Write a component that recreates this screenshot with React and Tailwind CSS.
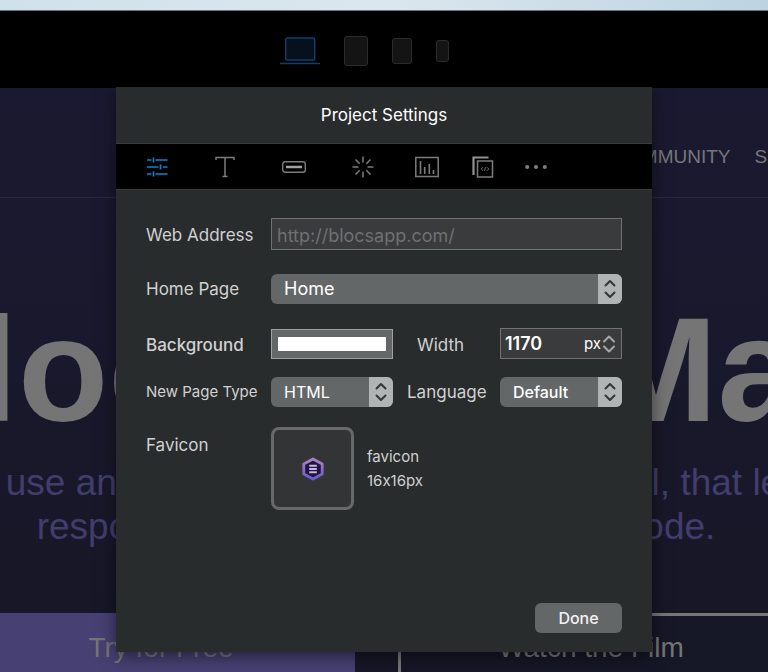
import { useState } from 'react';
import { ChevronDown, ChevronUp } from 'lucide-react';

const SlidersIcon = () => (
  <svg width="22" height="22" viewBox="0 0 22 22" fill="none" stroke="currentColor" strokeWidth="1.6">
    <path d="M1 4h4.500M9.500 4H21.500M1 11h11.500M17 11h4.500M1 18h4.500M9.500 18H21.500" />
    <path d="M7.500 1.500v5M14.500 8.500v5M7.500 15.500v5" />
  </svg>
);

const TypeIcon = () => (
  <svg width="20" height="22" viewBox="0 0 20 22" fill="none" stroke="currentColor" strokeWidth="1.500">
    <path d="M1 4V1.500h18V4M10 1.500v19M7.500 20.500h5" />
  </svg>
);

const ButtonIcon = () => (
  <svg width="24" height="12" viewBox="0 0 24 12" fill="none" stroke="currentColor">
    <rect x="0.700" y="0.700" width="22.600" height="10.600" rx="2.500" strokeWidth="1.400" />
    <path d="M4 6h16" stroke="#a3a3a3" strokeWidth="2.500" />
  </svg>
);

const BurstIcon = () => (
  <svg width="22" height="22" viewBox="0 0 22 22" fill="none" stroke="currentColor" strokeWidth="1.500">
    <path d="M11 0.500v6M11 15.500v6M0.500 11h6M15.500 11h6M3.500 3.500l4.200 4.200M14.300 14.300l4.200 4.200M3.500 18.500l4.200-4.200M14.300 7.700l4.200-4.200" />
  </svg>
);

const ChartIcon = () => (
  <svg width="24" height="22" viewBox="0 0 24 22" fill="none" stroke="currentColor">
    <rect x="0.800" y="1.500" width="22.400" height="19" strokeWidth="1.500" />
    <path d="M5.500 5v13M9.700 11v7M14.300 8v10M18.500 14v4" strokeWidth="1.600" />
  </svg>
);

const PagesIcon = () => (
  <svg width="22" height="22" viewBox="0 0 22 22" fill="none" stroke="currentColor">
    <path d="M1.500 19V1.500h15" stroke="#929292" strokeWidth="2.200" />
    <rect x="5.500" y="5" width="15" height="16" strokeWidth="1.500" />
    <path d="M11 11.200l-1.800 1.800 1.800 1.800M15 11.200l1.800 1.800-1.800 1.800M13.500 11l-1 4" strokeWidth="0.900" />
  </svg>
);

const DotsIcon = () => (
  <svg width="24" height="6" viewBox="0 0 24 6" fill="currentColor">
    <circle cx="3.200" cy="3" r="2.100" />
    <circle cx="12" cy="3" r="2.100" />
    <circle cx="20.800" cy="3" r="2.100" />
  </svg>
);

const FaviconIcon = () => (
  <svg width="26" height="26" viewBox="0 0 24 24" fill="none">
    <defs>
      <linearGradient id="hex" x1="0" y1="0" x2="0" y2="1">
        <stop offset="0" stopColor="#b07fc4" />
        <stop offset="1" stopColor="#6a5cc8" />
      </linearGradient>
    </defs>
    <path
      d="M12 2.700l8.500 4.700v9.200L12 21.300l-8.500-4.700V7.400z"
      fill="#1e1540"
      stroke="url(#hex)"
      strokeWidth="2.600"
      strokeLinejoin="round"
    />
    <path d="M8.500 9h7M8.500 12h7M8.500 15h7" stroke="#c9b8dd" strokeWidth="1.700" />
  </svg>
);

const tabs = [
  { id: 'general', label: 'General', icon: SlidersIcon, width: 'w-[69px]' },
  { id: 'type', label: 'Typography', icon: TypeIcon, width: 'w-[68px]' },
  { id: 'buttons', label: 'Buttons', icon: ButtonIcon, width: 'w-[69px]' },
  { id: 'effects', label: 'Effects', icon: BurstIcon, width: 'w-[69px]' },
  { id: 'analytics', label: 'Analytics', icon: ChartIcon, width: 'w-[59px]' },
  { id: 'code', label: 'Code', icon: PagesIcon, width: 'w-[54px]' },
  { id: 'more', label: 'More', icon: DotsIcon, width: 'w-[52px]' },
];

function Chevrons() {
  return (
    <svg width="12" height="20" viewBox="0 0 12 20" fill="none" stroke="currentColor" strokeWidth="2" strokeLinecap="round" strokeLinejoin="round">
      <path d="M1.500 6.500L6 2l4.500 4.500M1.500 13.500L6 18l4.500-4.500" />
    </svg>
  );
}

function Select({ id, options, className }) {
  return (
    <div className="relative">
      <select
        id={id}
        className={`block h-[30px] w-full appearance-none rounded-md bg-[#646768] pl-[13px] pr-7 text-white ${className}`}
      >
        {options.map((option) => (
          <option key={option}>{option}</option>
        ))}
      </select>
      <span className="pointer-events-none absolute inset-y-0 right-0 flex w-6 items-center justify-center rounded-r-md bg-[#b1b4b5] text-[#333637]">
        <Chevrons />
      </span>
    </div>
  );
}

function DeviceBar() {
  return (
    <div className="flex h-[77px] shrink-0 items-center justify-center gap-6 bg-black pr-10 pt-0.5">
      <button type="button" aria-label="Desktop">
        <svg width="40" height="28" viewBox="0 0 40 28" fill="none" stroke="#0d426f">
          <rect x="5.700" y="1" width="29" height="22" rx="1.500" fill="#06111d" strokeWidth="1.400" />
          <path d="M0 26.500h40" strokeWidth="1.400" />
        </svg>
      </button>
      <button type="button" aria-label="Tablet" className="h-[30px] w-6 rounded-[3px] border border-[#2b2b2b] bg-[#141414]" />
      <button type="button" aria-label="Small tablet" className="h-[26px] w-5 rounded-[3px] border border-[#2b2b2b] bg-[#141414]" />
      <button type="button" aria-label="Phone" className="h-[22px] w-[13px] rounded-[3px] border border-[#2b2b2b] bg-[#141414]" />
    </div>
  );
}

function SitePreview() {
  return (
    <div className="flex-1 bg-linear-to-b from-[#1b1931] to-[#161726] font-['Liberation_Sans',Arial,sans-serif]">
      <nav className="flex h-[110px] items-end justify-end border-b border-[#2a2940] pb-7">
        <div className="-mr-[78px] flex gap-6 text-[19px] leading-6 text-[#77777c]">
          <a href="#community">COMMUNITY</a>
          <a href="#support">SUPPORT</a>
        </div>
      </nav>
      <div className="pr-4">
        <h1 className="mt-[92px] flex justify-center gap-[62px] whitespace-nowrap text-[148px] font-bold leading-[160px] text-[#757576]">
          <span>Blocs</span>
          <span>for</span>
          <span>Mac</span>
        </h1>
        <div className="mt-[11px] text-[37px] leading-[44px] text-[#413e6d]">
          <p className="flex justify-center whitespace-nowrap">Fast, easy to use and powerful visual web design tool, that lets you build</p>
          <p className="flex justify-center whitespace-nowrap">responsive websites without writing code.</p>
        </div>
        <div className="mt-16 flex justify-center gap-[43px] text-[28px] text-[#757575]">
          <button type="button" className="h-[70px] w-[387px] shrink-0 bg-[#474073]">Try for Free</button>
          <button type="button" className="h-[70px] w-[387px] shrink-0 border-[3px] border-[#77777a]">Watch the Film</button>
        </div>
      </div>
    </div>
  );
}

function ProjectSettings() {
  const [active, setActive] = useState('general');
  const [color, setColor] = useState('#ffffff');
  const [width, setWidth] = useState(1170);

  return (
    <div
      role="dialog"
      aria-labelledby="settings-title"
      className="flex min-h-[565px] w-[536px] max-w-full flex-col bg-[#292c2d] font-[Inter,sans-serif] text-[17px] leading-6 text-[#d0d1d1] shadow-[0_4px_16px_rgba(0,0,0,0.5)]"
    >
      <h2 id="settings-title" className="flex h-[57px] items-center justify-center border-b border-[#3a3c3d] text-[17px] text-white">
        Project Settings
      </h2>

      <div role="tablist" className="flex h-[46px] border-b border-[#3a3c3d] bg-black pl-[6px]">
        {tabs.map(({ id, label, icon: Icon, width: tabWidth }) => (
          <button
            key={id}
            type="button"
            role="tab"
            aria-label={label}
            aria-selected={active === id}
            onClick={() => setActive(id)}
            className={`flex items-center justify-center ${tabWidth} ${active === id ? 'text-[#0a84d0]' : 'text-[#7c7c7c]'}`}
          >
            <Icon />
          </button>
        ))}
      </div>

      <form className="flex flex-1 flex-col px-[30px] pb-[19px] pt-7" onSubmit={(e) => e.preventDefault()}>
        <div className="grid grid-cols-[125px_1fr_107px_1fr] items-center gap-y-6">
          <label htmlFor="address" className="pt-0.5">Web Address</label>
          <input
            id="address"
            type="text"
            placeholder="http://blocsapp.com/"
            className="col-span-3 h-8 border border-[#707273] bg-[#393b3c] px-[5px] pt-0.5 text-lg text-white placeholder:text-[#6f7172]"
          />

          <label htmlFor="home">Home Page</label>
          <div className="col-span-3">
            <Select id="home" options={['Home']} className="text-lg" />
          </div>

          <label htmlFor="background" className="pt-0.5 font-medium">Background</label>
          <input
            id="background"
            type="color"
            value={color}
            onChange={(e) => setColor(e.target.value)}
            className="h-[30px] w-full border border-[#a0a2a3] bg-[#646768] px-[6px] py-[7px] [&::-webkit-color-swatch-wrapper]:p-0 [&::-webkit-color-swatch]:border-0"
          />
          <label htmlFor="width" className="pl-6 pt-0.5">Width</label>
          <div className="flex h-[31px] items-center border border-[#707273] bg-[#393b3c] pl-1 pr-1 text-white">
            <input
              id="width"
              type="text"
              value={width}
              onChange={(e) => setWidth(Number(e.target.value) || 0)}
              className="w-full min-w-0 text-lg font-semibold"
            />
            <span className="text-[15px]">px</span>
            <span className="flex shrink-0 flex-col text-[#a4a6a7]">
              <button type="button" aria-label="Increase width" onClick={() => setWidth(width + 1)}>
                <ChevronUp className="h-2.5 w-4" viewBox="4 6 16 12" strokeWidth={2.500} />
              </button>
              <button type="button" aria-label="Decrease width" onClick={() => setWidth(width - 1)}>
                <ChevronDown className="h-2.5 w-4" viewBox="4 6 16 12" strokeWidth={2.500} />
              </button>
            </span>
          </div>
        </div>

        <div className="mt-[18px] grid grid-cols-[125px_1fr_107px_1fr] items-center gap-y-5">
          <label htmlFor="page-type" className="text-[15px]">New Page Type</label>
          <Select id="page-type" options={['HTML', 'PHP']} className="text-base" />
          <label htmlFor="language" className="pl-[14px]">Language</label>
          <Select id="language" options={['Default', 'English']} className="text-base font-medium" />

          <label htmlFor="favicon" className="self-start pt-[6px]">Favicon</label>
          <div className="col-span-3 flex items-center gap-[13px]">
            <button
              id="favicon"
              type="button"
              aria-label="Choose favicon"
              className="flex size-[83px] items-center justify-center rounded-lg border-3 border-[#67696a] bg-[#323435]"
            >
              <FaviconIcon />
            </button>
            <p className="text-[15px] leading-6 [font-feature-settings:'calt'_0]">
              favicon
              <br />
              16x16px
            </p>
          </div>
        </div>

        <button type="submit" className="mt-auto h-[30px] w-[87px] self-end rounded-md bg-[#646768] text-base font-medium text-[#f2f2f2]">
          Done
        </button>
      </form>
    </div>
  );
}

export default function App() {
  return (
    <div className="relative flex h-screen flex-col overflow-hidden bg-[#161726]">
      <div className="h-[11px] shrink-0 border-b border-[#6d7478] bg-linear-to-r from-[#cfe1eb] via-[#dbe7ee] to-[#bdd3e2]" />
      <DeviceBar />
      <SitePreview />
      <div className="absolute inset-x-0 top-[87px] flex justify-center">
        <ProjectSettings />
      </div>
    </div>
  );
}
